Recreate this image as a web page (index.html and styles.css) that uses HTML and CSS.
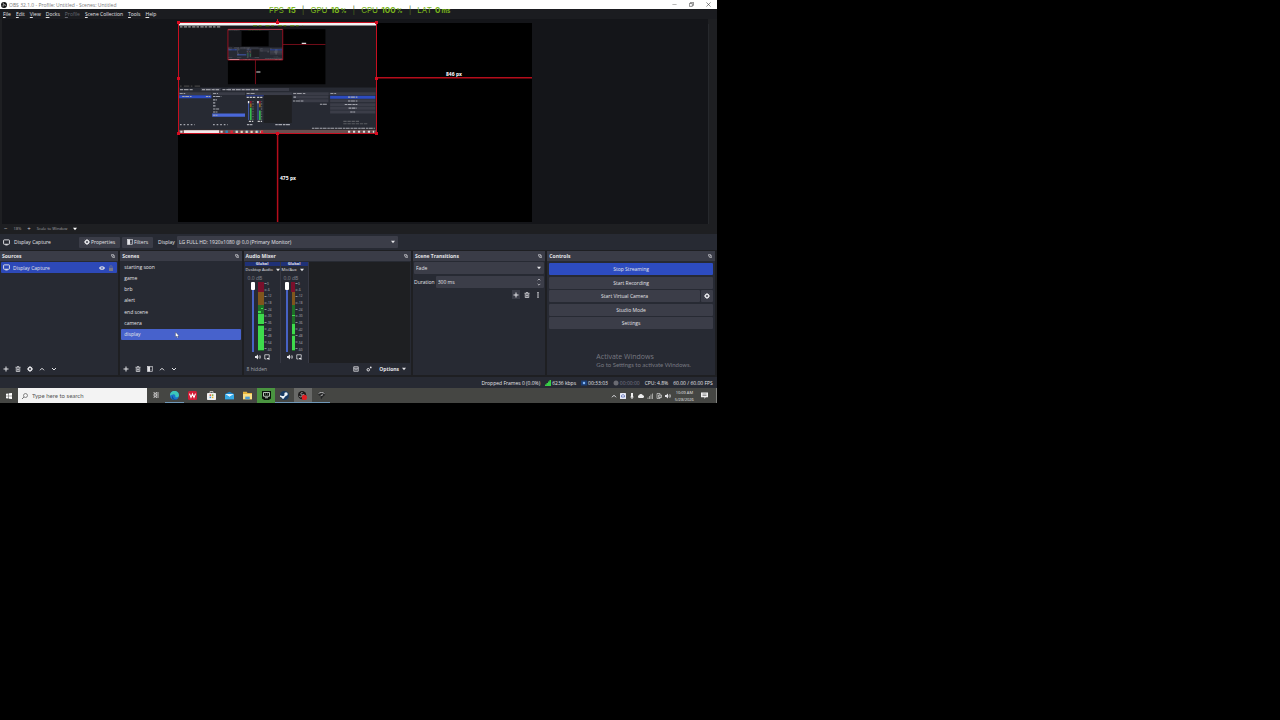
FILE: index.html
```
<!DOCTYPE html>
<html lang="en">
<head>
    <meta charset="UTF-8">
    <meta name="viewport" content="width=device-width, initial-scale=1.0">
    <title>OBS 32.1.0 - Profile: Untitled - Scenes: Untitled</title>
    <link rel="stylesheet" href="styles.css">
</head>
<body>
    <!-- shared icons -->
    <svg class="defs" width="0" height="0" aria-hidden="true">
        <symbol id="i-monitor" viewBox="0 0 12 12"><rect x="1" y="1.5" width="10" height="7.5" rx="1" fill="none" stroke="currentColor" stroke-width="1.6"/><path d="M4 9h4v2H4z" fill="currentColor"/></symbol>
        <symbol id="i-gear" viewBox="0 0 12 12"><circle cx="6" cy="6" r="3.2" fill="none" stroke="currentColor" stroke-width="2.6"/><path d="M6 0v2M6 10v2M0 6h2M10 6h2M1.8 1.8l1.4 1.4M8.8 8.8l1.4 1.4M1.8 10.2l1.4-1.4M8.8 3.2l1.4-1.4" stroke="currentColor" stroke-width="2"/></symbol>
        <symbol id="i-filter" viewBox="0 0 12 12"><rect x="1" y="1" width="10" height="10" fill="none" stroke="currentColor" stroke-width="1.2"/><path d="M1 1h5v10H1z" fill="currentColor"/><path d="M8 3v1M8 6v1M8 9v1" stroke="currentColor" stroke-width="1.4"/></symbol>
        <symbol id="i-plus" viewBox="0 0 12 12"><path d="M6 1v10M1 6h10" stroke="currentColor" stroke-width="2"/></symbol>
        <symbol id="i-trash" viewBox="0 0 12 12"><path d="M1 2.5h10M4 1.2h4M2.5 3v8h7V3M5 5v4M7 5v4" fill="none" stroke="currentColor" stroke-width="1.5"/></symbol>
        <symbol id="i-up" viewBox="0 0 12 12"><path d="M2 8.5l4-4 4 4" fill="none" stroke="currentColor" stroke-width="2"/></symbol>
        <symbol id="i-down" viewBox="0 0 12 12"><path d="M2 4l4 4 4-4" fill="none" stroke="currentColor" stroke-width="2"/></symbol>
        <symbol id="i-caret" viewBox="0 0 12 12"><path d="M0 2h12L6 10z" fill="currentColor"/></symbol>
        <symbol id="i-float" viewBox="0 0 12 12"><path d="M1.5 1.5h6v5h-6zM5 7v3.5h6V5H8" fill="none" stroke="currentColor" stroke-width="1.6"/></symbol>
        <symbol id="i-eye" viewBox="0 0 12 12"><path d="M0 6c2.5-5 9.5-5 12 0-2.5 5-9.5 5-12 0z" fill="currentColor"/><circle cx="6" cy="6" r="1.9" fill="none" stroke="#2d49b8" stroke-width="1.3"/></symbol>
        <symbol id="i-lock" viewBox="0 0 12 12"><path d="M2 5.5h8V12H2z" fill="currentColor"/><path d="M3.8 5.5V3.5a2.2 2.2 0 0 1 4.4 0v2" fill="none" stroke="currentColor" stroke-width="1.4"/></symbol>
        <symbol id="i-dots" viewBox="0 0 12 12"><circle cx="6" cy="1.8" r="1.6" fill="currentColor"/><circle cx="6" cy="6" r="1.6" fill="currentColor"/><circle cx="6" cy="10.2" r="1.6" fill="currentColor"/></symbol>
        <symbol id="i-speaker" viewBox="0 0 12 12"><path d="M0 4h2.5L6 1v10L2.5 8H0z" fill="currentColor"/><path d="M7.5 4c1 1.2 1 2.8 0 4M9.3 2.2c2 2 2 5.6 0 7.6" fill="none" stroke="currentColor" stroke-width="1.4"/></symbol>
        <symbol id="i-monitoring" viewBox="0 0 12 12"><path d="M5 10H1.5V1.5h9V6" fill="none" stroke="currentColor" stroke-width="1.5"/><path d="M6 8h2l3-2v6L8 10.5H6z" fill="currentColor"/></symbol>
        <symbol id="i-layout" viewBox="0 0 12 12"><path d="M1.5 1.5h9v9h-9zM1.5 4.5h9M3 7.5h6" fill="none" stroke="currentColor" stroke-width="1.5"/></symbol>
        <symbol id="i-gears" viewBox="0 0 12 12"><circle cx="4.5" cy="7.5" r="2.5" fill="none" stroke="currentColor" stroke-width="2"/><circle cx="9.5" cy="2.8" r="1.8" fill="currentColor"/></symbol>

        <!-- small-scale drawing of the captured desktop -->
        <symbol id="desk" viewBox="0 0 716 403">
            <path fill="#16171b" d="M0 0h716v403H0z"/>
            <path fill="#f4f4f4" d="M0 0h716v9H0z"/>
            <path fill="#000" d="M178 23h354v199H178z"/>
            <path stroke="#999" stroke-width="4" stroke-dasharray="9 5 12 4" d="M4 14h150"/>
            <path stroke="#5d8a10" stroke-width="4" stroke-dasharray="15 6 10 14" d="M269 10h182"/>
            <path stroke="#444" stroke-width="4" stroke-dasharray="6 8 20 5" d="M4 229h74"/>
            <path fill="#272a33" d="M0 234h716v153H0z"/>
            <path fill="#3a3c47" d="M0 251h118v10H0zM121 251h119v10H121zM244 251h166v10H244zM413 251h131v10H413zM547 251h167v10H547zM178 236h222v11H178zM80 236h40v11H80zM122 236h30v11h-30z"/>
            <path stroke="#9b9ca3" stroke-width="4" stroke-dasharray="11 3 17 4" d="M4 242h46M84 242h62M158 242h130M3 256h20M124 256h18M246 256h29M415 256h44M550 256h21"/>
            <path fill="#2d4cc0" d="M1 262h117v11H1zM549 264h164v11H549z"/>
            <path fill="#4a68da" d="M121 329h119v11H121z"/>
            <path fill="#3b3d48" d="M549 277h164v11H549zM549 291h164v11H549zM549 304h164v11H549zM549 318h164v11H549zM415 263h128v11H415zM435 277h108v11H435z"/>
            <path stroke="#a6a8b0" stroke-width="4" stroke-dasharray="9 2 14 3" d="M12 267h34M98 267h16M124 267h30M124 279h14M124 290h8M124 301h10M124 312h22M124 323h16M124 335h16M416 269h11M414 283h40M614 269h34M614 283h34M602 296h46M616 309h30M622 323h18M512 295h28M247 369h20M350 369h54M483 382h228"/>
            <path stroke="#a6a8b0" stroke-width="5" stroke-dasharray="6 7" d="M4 369h54M124 369h54"/>
            <path fill="#1e1f22" d="M308 262h102v101H308z"/>
            <path fill="#28388a" d="M244 262h64v4h-64z"/>
            <path stroke="#ccc" stroke-width="4" stroke-dasharray="8 3" d="M246 270h34M284 270h22M254 357h16M286 357h16"/>
            <path stroke="#4762c4" stroke-width="3" d="M253 284v68M287 284v68"/>
            <path stroke="#eee" stroke-width="5" d="M253 283v8M287 283v8"/>
            <path stroke="#8b1632" stroke-width="6" d="M261 283v9M294 283v9"/>
            <path stroke="#96651d" stroke-width="6" d="M261 292v14M294 292v14"/>
            <path stroke="#36bd4c" stroke-width="6" d="M261 308v44M294 318v34"/>
            <path stroke="#777" stroke-width="5" stroke-dasharray="2 4" d="M269 284v68M300 284v68"/>
            <path stroke="#5a5c62" stroke-width="4" stroke-dasharray="12 3" d="M597 357h58M597 366h87"/>
            <path fill="#6a4f50" d="M0 388h716v15H0z"/>
            <path fill="#f3e9ea" d="M18 389h128v13H18z"/>
            <path stroke="#ddd" stroke-width="7" stroke-dasharray="8 10" d="M5 395h9M151 395h12M614 395h95"/>
            <path stroke="#3386b8" stroke-width="9" stroke-dasharray="9 28" d="M169 395h132"/>
            <path stroke="#dfd6c0" stroke-width="8" stroke-dasharray="8 10" d="M206 395h108"/>
            <path stroke="#d42a38" stroke-width="9" d="M187 395h9M298 395h8"/>
        </symbol>
        <symbol id="desk-nested" viewBox="0 0 716 403">
            <use href="#desk" width="716" height="403"/>
            <use href="#desk" x="178" y="23" width="199" height="112"/>
            <path fill="none" stroke="#b01428" stroke-width="3" d="M178 23h199v111H178z"/>
            <path fill="none" stroke="#8a101e" stroke-width="3" d="M377 78h155M278 134v88"/>
            <path stroke="#ddd" stroke-width="4" d="M446 74h16M281 178h15"/>
        </symbol>
    </svg>

    <div class="desktop">
        <header class="titlebar">
            <svg class="app-icon" viewBox="0 0 12 12"><circle cx="6" cy="6" r="6" fill="#111"/><path d="M6 6C3 5 4 2 6 2M6 6c2-2 4 0 3 2M6 6c0 3-3 3-4 1" fill="none" stroke="#ddd" stroke-width="1.3"/></svg>
            <span class="title">OBS 32.1.0 - Profile: Untitled - Scenes: Untitled</span>
            <div class="window-buttons">
                <button aria-label="Minimize"><svg viewBox="0 0 12 12"><path d="M1 6h10" stroke="#555"/></svg></button>
                <button aria-label="Restore"><svg viewBox="0 0 12 12"><path d="M1 3.5h7v7H1zM3.5 3V1h7.5v7H8.5" fill="none" stroke="#333" stroke-width="1.3"/></svg></button>
                <button aria-label="Close"><svg viewBox="0 0 12 12"><path d="M1 1l10 10M11 1L1 11" stroke="#333" stroke-width="1.3"/></svg></button>
            </div>
        </header>

        <div class="overlay">
            <span>FPS <b>15</b></span><i>|</i>
            <span>GPU <b>18<small>%</small></b></span><i>|</i>
            <span>CPU <b>100<small>%</small></b></span><i>|</i>
            <span>LAT <b>0<small>ms</small></b></span>
        </div>

        <nav class="menubar">
            <a href="#"><u>F</u>ile</a>
            <a href="#"><u>E</u>dit</a>
            <a href="#"><u>V</u>iew</a>
            <a href="#"><u>D</u>ocks</a>
            <a href="#" class="dim"><u>P</u>rofile</a>
            <a href="#"><u>S</u>cene Collection</a>
            <a href="#"><u>T</u>ools</a>
            <a href="#"><u>H</u>elp</a>
        </nav>

        <main class="preview">
            <svg viewBox="0 19 716 205" preserveAspectRatio="xMinYMin meet">
                <path fill="#141519" d="M2 19h706v205H2z"/>
                <path fill="#26282c" d="M708 24h1v200h-1z"/>
                <path fill="#000" d="M178 23h354v199H178z"/>
                <use href="#desk-nested" x="178" y="23" width="199" height="111"/>
                <path fill="none" stroke="#c60f20" d="M178.5 22.5h198v111h-198z"/>
                <path fill="none" stroke="#b50d1b" stroke-width="1.5" d="M377 77.8h155"/>
                <path fill="none" stroke="#b50d1b" stroke-width="1.5" d="M277.6 134v88"/>
                <path fill="#d90b20" d="M177 21h3v3h-3zM276 21h3v3h-3zM375 21h3v3h-3zM177 77h3v3h-3zM375 77h3v3h-3zM177 132h3v3h-3zM276 132h3v3h-3zM375 132h3v3h-3zM277 19h1v3h-1z"/>
                <text x="446" y="76">846 px</text>
                <text x="280" y="180">475 px</text>
            </svg>
        </main>

        <div class="zoombar">
            <button class="step" aria-label="Zoom out">−</button>
            <span>18%</span>
            <button class="step" aria-label="Zoom in">+</button>
            <label for="scale">Scale to Window</label>
            <button id="scale" aria-label="Scaling options"><svg><use href="#i-caret"/></svg></button>
        </div>

        <div class="context">
            <div class="source-name"><svg class="icon-lg"><use href="#i-monitor"/></svg>Display Capture</div>
            <button class="btn props"><svg><use href="#i-gear"/></svg>Properties</button>
            <button class="btn filters"><svg><use href="#i-filter"/></svg>Filters</button>
            <label for="display">Display</label>
            <div class="select">
                <select id="display"><option>LG FULL HD: 1920x1080 @ 0,0 (Primary Monitor)</option></select>
                <svg><use href="#i-caret"/></svg>
            </div>
        </div>

        <div class="docks">
            <section class="dock">
                <h2>Sources<svg><use href="#i-float"/></svg></h2>
                <div class="dock-body">
                    <div class="source selected">
                        <svg class="icon-lg"><use href="#i-monitor"/></svg>
                        <span>Display Capture</span>
                        <svg><use href="#i-eye"/></svg>
                        <svg class="dim"><use href="#i-lock"/></svg>
                    </div>
                </div>
                <footer class="tools">
                    <button aria-label="Add source"><svg><use href="#i-plus"/></svg></button>
                    <button aria-label="Remove source"><svg><use href="#i-trash"/></svg></button>
                    <button aria-label="Source properties"><svg><use href="#i-gear"/></svg></button>
                    <button aria-label="Move source up"><svg><use href="#i-up"/></svg></button>
                    <button aria-label="Move source down"><svg><use href="#i-down"/></svg></button>
                </footer>
            </section>

            <section class="dock">
                <h2>Scenes<svg><use href="#i-float"/></svg></h2>
                <div class="dock-body">
                    <ul class="scenes">
                        <li>starting soon</li>
                        <li>game</li>
                        <li>brb</li>
                        <li>alert</li>
                        <li>end scene</li>
                        <li>camera</li>
                        <li class="active">display
                            <svg class="cursor" viewBox="0 0 8 12"><path d="M1 0v10l2-2 2 4 1.5-1-1.5-3h3z" fill="#fff" stroke="#333" stroke-width=".6"/></svg>
                        </li>
                    </ul>
                </div>
                <footer class="tools">
                    <button aria-label="Add scene"><svg><use href="#i-plus"/></svg></button>
                    <button aria-label="Remove scene"><svg><use href="#i-trash"/></svg></button>
                    <button aria-label="Scene filters"><svg><use href="#i-filter"/></svg></button>
                    <button aria-label="Move scene up"><svg><use href="#i-up"/></svg></button>
                    <button aria-label="Move scene down"><svg><use href="#i-down"/></svg></button>
                </footer>
            </section>

            <section class="dock">
                <h2>Audio Mixer<svg><use href="#i-float"/></svg></h2>
                <div class="dock-body mixer">
                    <div class="channel wide">
                        <div class="tag">Global</div>
                        <button class="name">Desktop Audio<svg><use href="#i-caret"/></svg></button>
                        <div class="db">0.0 dB</div>
                        <div class="levels">
                            <input type="range" min="0" max="100" value="100" aria-label="Desktop Audio volume">
                            <svg class="meter" viewBox="0 0 15 70">
                                <path fill="#7a0f2b" d="M0 0h6v10H0z"/><path fill="#80551c" d="M0 10h6v13H0z"/><path fill="#1d7027" d="M0 23h6v46H0z"/>
                                <path fill="#3ddb4c" d="M0 32h6v10H0zM0 44h6v24H0zM0 29h3v2H0zM3 26h2v1H3z"/><path fill="#17331b" d="M0 42h6v1H0z"/>
                                <path stroke="#8b8d94" stroke-dasharray="1 5.5" stroke-width="2" d="M7.5 1v68"/>
                                <g><text x="9" y="3">0</text><text x="9" y="9">-6</text><text x="9" y="15">-12</text><text x="9" y="22">-18</text><text x="9" y="29">-24</text><text x="9" y="35">-30</text><text x="9" y="42">-36</text><text x="9" y="49">-42</text><text x="9" y="55">-48</text><text x="9" y="62">-54</text><text x="9" y="69">-60</text></g>
                            </svg>
                        </div>
                        <div class="channel-tools">
                            <button aria-label="Mute Desktop Audio"><svg><use href="#i-speaker"/></svg></button>
                            <button aria-label="Monitor Desktop Audio"><svg><use href="#i-monitoring"/></svg></button>
                        </div>
                    </div>
                    <div class="channel">
                        <div class="tag">Global</div>
                        <button class="name">Mic/Aux<svg><use href="#i-caret"/></svg></button>
                        <div class="db">0.0 dB</div>
                        <div class="levels">
                            <input type="range" min="0" max="100" value="100" aria-label="Mic/Aux volume">
                            <svg class="meter" viewBox="0 0 15 70">
                                <path fill="#7a0f2b" d="M1 0h4v10H1z"/><path fill="#80551c" d="M2 10h3v13H2z"/><path fill="#1d7027" d="M2 23h3v46H2z"/>
                                <path fill="#3ddb4c" d="M2 42h3v10H2zM2 54h3v14H2zM2 33h3v1H2z"/>
                                <path stroke="#8b8d94" stroke-dasharray="1 5.5" stroke-width="2" d="M6.5 1v68"/>
                                <g><text x="8" y="3">0</text><text x="8" y="9">-6</text><text x="8" y="15">-12</text><text x="8" y="22">-18</text><text x="8" y="29">-24</text><text x="8" y="35">-30</text><text x="8" y="42">-36</text><text x="8" y="49">-42</text><text x="8" y="55">-48</text><text x="8" y="62">-54</text><text x="8" y="69">-60</text></g>
                            </svg>
                        </div>
                        <div class="channel-tools">
                            <button aria-label="Mute Mic/Aux"><svg><use href="#i-speaker"/></svg></button>
                            <button aria-label="Monitor Mic/Aux"><svg><use href="#i-monitoring"/></svg></button>
                        </div>
                    </div>
                    <div class="mixer-empty"></div>
                </div>
                <footer class="tools mixer-tools">
                    <span class="hidden-count">8 hidden</span>
                    <button aria-label="Toggle layout"><svg><use href="#i-layout"/></svg></button>
                    <button aria-label="Advanced audio properties"><svg><use href="#i-gears"/></svg></button>
                    <button class="options">Options<svg><use href="#i-caret"/></svg></button>
                </footer>
            </section>

            <section class="dock">
                <h2>Scene Transitions<svg><use href="#i-float"/></svg></h2>
                <div class="dock-body transitions">
                    <div class="select">
                        <select aria-label="Transition"><option>Fade</option></select>
                        <svg><use href="#i-caret"/></svg>
                    </div>
                    <div class="duration">
                        <label for="duration">Duration</label>
                        <div class="spin">
                            <input id="duration" type="text" value="300 ms">
                            <div class="spin-buttons"><svg><use href="#i-up"/></svg><svg><use href="#i-down"/></svg></div>
                        </div>
                    </div>
                    <div class="transition-tools">
                        <button class="add" aria-label="Add transition"><svg><use href="#i-plus"/></svg></button>
                        <button aria-label="Remove transition"><svg><use href="#i-trash"/></svg></button>
                        <button aria-label="Transition menu"><svg><use href="#i-dots"/></svg></button>
                    </div>
                </div>
            </section>

            <section class="dock">
                <h2>Controls<svg><use href="#i-float"/></svg></h2>
                <div class="dock-body">
                    <div class="controls">
                        <button class="btn primary">Stop Streaming</button>
                        <button class="btn">Start Recording</button>
                        <div class="split">
                            <button class="btn">Start Virtual Camera</button>
                            <button class="btn square" aria-label="Virtual camera settings"><svg><use href="#i-gear"/></svg></button>
                        </div>
                        <button class="btn">Studio Mode</button>
                        <button class="btn">Settings</button>
                    </div>
                    <div class="watermark">
                        <p class="big">Activate Windows</p>
                        <p>Go to Settings to activate Windows.</p>
                    </div>
                </div>
            </section>
        </div>

        <div class="statusbar">
            <span>Dropped Frames 0 (0.0%)</span>
            <span><svg viewBox="0 0 12 12"><path d="M0 9h3v3H0zM3 6h3v6H3zM6 3h3v9H6zM9 0h3v12H9z" fill="#38cf46"/></svg>6236 kbps</span>
            <span><svg viewBox="0 0 12 12"><path d="M0 1h12v10H0z" fill="#1b3f78"/><circle cx="6" cy="6" r="2.5" fill="#7fb4f5"/></svg>00:33:03</span>
            <span class="dim"><svg viewBox="0 0 12 12"><circle cx="6" cy="6" r="5" fill="#6a6b72"/></svg>00:00:00</span>
            <span>CPU: 4.8%</span>
            <span>60.00 / 60.00 FPS</span>
        </div>

        <div class="taskbar">
            <button class="start" aria-label="Start"><svg viewBox="0 0 12 12"><path d="M0 1.5l5-.7v4.7H0zM6 .7L12 0v5.5H6zM0 6.5h5v4.7l-5-.7zM6 6.5h6V12l-6-.7z" fill="#fff"/></svg></button>
            <div class="search">
                <svg viewBox="0 0 12 12"><circle cx="7" cy="5" r="4" fill="none" stroke="#444" stroke-width="1.2"/><path d="M4 8l-4 4" stroke="#444" stroke-width="1.4"/></svg>
                <input type="text" placeholder="Type here to search" aria-label="Search">
            </div>
            <div class="apps">
                <button aria-label="Task View"><svg viewBox="0 0 12 12"><path d="M2 0v2.5h5V0M2 12V9.5h5V12M2 4h5v4H2zM10 0v12" fill="none" stroke="#e6e6e6" stroke-width="1.4"/></svg></button>
                <button class="open" aria-label="Edge"><svg viewBox="0 0 12 12"><circle cx="6" cy="6" r="6" fill="#1b74c9"/><path d="M0 6a6 6 0 0 1 12-.5c0 2.5-3 3.5-5 2.5 1-2-1-4-3-3.5S0 6 0 6z" fill="#3cc7b8"/><path d="M4 6c-1 3 2 6 6 4.5-4 3-10 0-6-4.5z" fill="#0c4b93"/></svg></button>
                <button aria-label="WPS"><svg viewBox="0 0 12 12"><rect width="12" height="12" rx="2" fill="#d31b36"/><path d="M2 3.5L4 8.5 6 4l2 4.5 2-5" fill="none" stroke="#fff" stroke-width="1.5"/></svg></button>
                <button aria-label="Store"><svg viewBox="0 0 12 12"><path d="M4 2.5V.8h4v1.7" fill="none" stroke="#eee"/><rect y="2.5" width="12" height="9.5" rx="1" fill="#f1f1f1"/><path d="M3.5 4.5h2v2h-2z" fill="#e4522a"/><path d="M6.5 4.5h2v2h-2z" fill="#7cb32c"/><path d="M3.5 7.5h2v2h-2z" fill="#2a9de0"/><path d="M6.5 7.5h2v2h-2z" fill="#f0b320"/></svg></button>
                <button aria-label="Mail"><svg viewBox="0 0 12 12"><path d="M0 4l6-3 6 3v7H0z" fill="#1a83c8"/><path d="M0 4h12L6 8z" fill="#d8f0fc"/><path d="M0 4l6 4 6-4v7H0z" fill="#35aae6"/></svg></button>
                <button aria-label="File Explorer"><svg viewBox="0 0 12 12"><path d="M0 1h5l1 1.5h6V11H0z" fill="#e8b63f"/><path d="M0 4h12v7H0z" fill="#fadf86"/><path d="M3 7.5h6V11H3z" fill="#4d9ed6"/></svg></button>
                <button class="green" aria-label="Game"><svg viewBox="0 0 12 12"><path d="M0 0h12v10l-3 2H3l-3-2z" fill="#0b120b"/><path d="M2 2h8v5H2zM4 4h1M7 4h1M4 9h4" fill="none" stroke="#c8d4c8" stroke-width="1.2"/></svg></button>
                <button class="open" aria-label="Steam"><svg viewBox="0 0 12 12"><circle cx="6" cy="6" r="6" fill="#173a63"/><circle cx="8" cy="4" r="2.3" fill="#eef3f8"/><path d="M0 6.5l4.5 2L8 5" fill="none" stroke="#eef3f8" stroke-width="2"/><circle cx="4" cy="8.5" r="1.7" fill="#eef3f8"/></svg></button>
                <button class="open current" aria-label="OBS Studio"><svg viewBox="0 0 12 12"><circle cx="5.5" cy="5.5" r="5.5" fill="#1c1a1b"/><path d="M5.5 5.5C2.5 4.5 4 1.5 6 2M5.5 5.5c0 3-3 3-4 1M5.5 5.5c2-2 4 0 3 1" fill="none" stroke="#c7c7c7"/><circle cx="8.5" cy="8.5" r="3.5" fill="#e01f24"/></svg></button>
                <button class="open" aria-label="Capture tool"><svg viewBox="0 0 12 12"><path d="M1 4c2-4 9-4 10 0 0 3-4 3-5 7-2-1-1-4 0-5-2 1-4 0-5-2z" fill="#242526"/><path d="M2 3.5c2-2 6-2 8 0M5 6l3-1" fill="none" stroke="#c9c9c9" stroke-width="1.2"/></svg></button>
            </div>
            <div class="tray">
                <svg><use href="#i-up"/></svg>
                <svg viewBox="0 0 12 12"><rect width="12" height="12" rx="1" fill="#e6e9f5"/><path d="M3 8V5l3-2 3 2v3z" fill="none" stroke="#4c5fb0" stroke-width="1.4"/></svg>
                <svg viewBox="0 0 12 12"><path d="M4 0h4v7H4zM3 7h6v2H3zM5 9h2v3H5z" fill="#eee"/></svg>
                <svg viewBox="0 0 12 12"><path d="M2 10a2.8 2.8 0 0 1 0-5.5 4 4 0 0 1 7.5 0A2.8 2.8 0 0 1 10 10z" fill="#eee"/></svg>
                <svg viewBox="0 0 12 12"><path d="M1 9h2v3H1zM4 6h2v6H4zM7 3h2v9H7zM10 1h2v11h-2z" fill="#a5a5a2"/></svg>
                <svg viewBox="0 0 12 12"><path d="M2 1h6v10H2zM5 4h6v5H5z" fill="none" stroke="#ddd" stroke-width="1.3"/></svg>
                <svg><use href="#i-speaker"/></svg>
                <div class="clock">10:09 AM<br>5/28/2026</div>
                <svg class="notify" viewBox="0 0 12 12"><path d="M0 1h12v8H8l-2 3V9H0z" fill="#f2f2f2"/><path d="M2.5 3.5h7M2.5 6h7" stroke="#555"/></svg>
            </div>
        </div>
    </div>
</body>
</html>
```
FILE: styles.css
```
* {
    box-sizing: border-box;
}
body {
    margin: 0;
    background-color: #000;
    color: #e4e4e8;
    font-family: "Open Sans", "Noto Sans", sans-serif;
    font-size: 5px;
    line-height: 8px;
}
.defs {
    position: absolute;
}
svg {
    display: block;
    flex: none;
    width: 6px;
    height: 6px;
}
h2, p, ul {
    margin: 0;
    padding: 0;
}
button, input, select {
    margin: 0;
    padding: 0;
    border: none;
    background: none;
    color: inherit;
    font: inherit;
    min-width: 0;
}
button {
    display: flex;
    align-items: center;
    justify-content: center;
}
.dim {
    color: #77798a;
}
.icon-lg {
    width: 7px;
    height: 7px;
}

.desktop {
    position: relative;
    width: 56%;
    background-color: #1e1f22;
}

/* title and menu */
.titlebar {
    display: flex;
    align-items: center;
    height: 9px;
    padding: 0 6px 0 1px;
    background-color: #fff;
    color: #777;
}
.title {
    flex: 1;
    padding-left: 2px;
    white-space: pre;
}
.window-buttons {
    display: flex;
    gap: 12px;
}
.window-buttons svg {
    width: 5px;
    height: 5px;
}
.overlay {
    position: absolute;
    top: 5px;
    left: 269px;
    display: flex;
    gap: 6px;
    color: #78b41c;
    font-family: Inter, sans-serif;
    font-size: 8px;
    line-height: 10px;
    white-space: nowrap;
}
.overlay b {
    margin-left: 1px;
}
.overlay i {
    color: #4b6b1c;
    font-style: normal;
}
.overlay small {
    margin-left: 1px;
    font-size: 6px;
}
.menubar {
    display: flex;
    gap: 5px;
    height: 10px;
    padding: 1px 3px;
    background-color: #1b1c20;
}
.menubar a {
    color: inherit;
    text-decoration: none;
}
.menubar a.dim {
    color: #666873;
}

/* preview */
.preview svg {
    width: 100%;
    height: 205px;
}
.preview text {
    fill: #fff;
    font-size: 5px;
    font-weight: 700;
}
.zoombar {
    display: flex;
    align-items: center;
    gap: 6px;
    height: 10px;
    padding-left: 4px;
    color: #a0a0a6;
    font-size: 4px;
}
.zoombar .step {
    color: #d0d0d4;
    font-size: 6px;
}
#scale {
    color: #fff;
}
#scale svg {
    width: 4px;
    height: 4px;
}

/* source toolbar */
.context {
    display: flex;
    align-items: center;
    height: 16px;
    padding-left: 3px;
    background-color: #272a33;
}
.source-name {
    display: flex;
    align-items: center;
    gap: 4px;
    width: 76px;
}
.btn {
    gap: 1px;
    height: 11px;
    border-radius: 1px;
    background-color: #3b3d48;
}
.props {
    width: 41px;
}
.filters {
    width: 31px;
    margin-left: 2px;
}
.context label {
    width: 24px;
    padding-left: 5px;
}
.select {
    display: flex;
    align-items: center;
    height: 12px;
    padding: 0 3px 0 2px;
    border-radius: 1px;
    background-color: #3b3d48;
}
.context .select {
    width: 31%;
}
.select select {
    flex: 1;
    appearance: none;
}
.select svg {
    width: 4px;
    height: 4px;
}

/* docks */
.docks {
    display: grid;
    grid-template-columns: 118fr 121fr 167fr 132fr 167fr;
    gap: 2px;
    padding: 1px 2px 2px 0;
}
.dock {
    display: flex;
    flex-direction: column;
    min-width: 0;
    background-color: #272a33;
}
.dock h2 {
    display: flex;
    align-items: center;
    justify-content: space-between;
    height: 10px;
    padding: 0 3px 0 2px;
    background-color: #3a3c47;
    font-size: 5px;
    font-weight: 700;
}
.dock h2 svg {
    width: 4px;
    height: 4px;
}
.dock-body {
    flex: 1;
    min-height: 102px;
    padding: 1px 1px 0;
}
.tools {
    display: flex;
    align-items: center;
    gap: 6px;
    height: 12px;
    padding: 0 3px;
}
.source {
    display: flex;
    align-items: center;
    gap: 3px;
    height: 11px;
    padding: 0 3px 0 2px;
    border-radius: 1px;
}
.source.selected {
    background-color: #2d49b8;
}
.source span {
    flex: 1;
}
.scenes {
    display: flex;
    flex-direction: column;
    justify-content: space-between;
    height: 78px;
    list-style: none;
}
.scenes li {
    position: relative;
    height: 11px;
    padding: 1px 3px;
    border-radius: 1px;
}
.scenes .active {
    background-color: #4762cc;
}
.cursor {
    position: absolute;
    top: 3px;
    left: 54px;
    width: 4px;
    height: 6px;
}

/* mixer */
.mixer {
    display: flex;
}
.channel {
    width: 28px;
    border-right: 1px solid #363843;
}
.channel.wide {
    width: 36px;
}
.mixer-empty {
    flex: 1;
    background-color: #1e1f22;
}
.tag {
    height: 4px;
    background-color: #1f3177;
    font-size: 4px;
    font-weight: 700;
    line-height: 4px;
    text-align: center;
}
.name {
    justify-content: flex-start;
    gap: 3px;
    padding-left: 1px;
    white-space: nowrap;
    font-size: 4px;
}
.name svg {
    width: 4px;
    height: 4px;
}
.db {
    padding-left: 3px;
    color: #83858f;
    font-size: 5px;
}
.levels {
    display: flex;
    align-items: flex-start;
    gap: 3px;
    padding-left: 6px;
}
.channel:not(.wide) .levels {
    gap: 1px;
    padding-left: 4px;
}
.levels input {
    appearance: none;
    writing-mode: vertical-lr;
    direction: rtl;
    width: 4px;
    height: 70px;
    background: linear-gradient(#4762c4, #4762c4) center / 2px 100% no-repeat;
}
.levels input::-webkit-slider-thumb {
    appearance: none;
    width: 4px;
    height: 8px;
    border-radius: 1px;
    background-color: #fff;
}
.meter {
    width: 15px;
    height: 70px;
}
.meter text {
    fill: #b9bac1;
    font-size: 3px;
}
.channel-tools {
    display: flex;
    justify-content: center;
    gap: 3px;
    padding-top: 2px;
}
.mixer-tools {
    gap: 7px;
    padding-right: 5px;
}
.hidden-count {
    flex: 1;
    color: #a5a7b0;
}
.options {
    gap: 3px;
    font-weight: 700;
}
.options svg {
    width: 4px;
    height: 4px;
}

/* transitions */
.transitions {
    display: flex;
    flex-direction: column;
    gap: 2px;
}
.duration {
    display: flex;
    align-items: center;
    gap: 1px;
}
.spin {
    display: flex;
    flex: 1;
    align-items: center;
    height: 12px;
    padding: 0 3px 0 2px;
    border-radius: 1px;
    background-color: #3b3d48;
}
.spin input {
    flex: 1;
}
.spin-buttons svg {
    width: 4px;
    height: 5px;
}
.transition-tools {
    display: flex;
    justify-content: flex-end;
    gap: 3px;
    padding-right: 2px;
}
.transition-tools button {
    width: 8px;
    height: 9px;
}
.transition-tools .add {
    background-color: #3b3d48;
}

/* controls */
.controls {
    display: flex;
    flex-direction: column;
    justify-content: space-between;
    height: 68px;
    padding: 1px;
}
.controls .btn {
    height: 12px;
}
.controls .primary {
    background-color: #2d4cc0;
}
.split {
    display: flex;
    gap: 1px;
}
.split .btn {
    flex: 1;
}
.split .square {
    flex: none;
    width: 12px;
}
.watermark {
    padding: 23px 0 0 48px;
    color: #777981;
    font-family: Lato, sans-serif;
    font-size: 6px;
    white-space: nowrap;
}
.watermark .big {
    font-size: 7px;
    font-family: "Open Sans", sans-serif;
}

/* status bar */
.statusbar {
    display: flex;
    align-items: center;
    justify-content: flex-end;
    gap: 5px;
    height: 11px;
    padding-right: 4px;
    background-color: #272a33;
}
.statusbar span {
    display: flex;
    align-items: center;
    gap: 1px;
}

/* taskbar */
.taskbar {
    display: flex;
    height: 15px;
    background-color: #454643;
}
.start {
    width: 18px;
}
.search {
    display: flex;
    align-items: center;
    gap: 4px;
    width: 18%;
    padding-left: 4px;
    background-color: #f3f3f3;
}
.search input {
    flex: 1;
    font-family: Lato, sans-serif;
    font-size: 6px;
}
.search input::placeholder {
    color: #555;
}
.apps {
    display: flex;
    width: 25.6%;
}
.apps button {
    flex: 1;
    border-bottom: 1px solid transparent;
}
.apps svg {
    width: 9px;
    height: 9px;
}
.apps button:first-child svg {
    width: 6px;
    height: 6px;
}
.apps .open {
    border-color: #7098b8;
}
.apps .current {
    background-color: #686967;
}
.apps .green {
    background-color: #4a9440;
}
.tray {
    display: flex;
    flex: 1;
    align-items: center;
    justify-content: flex-end;
    gap: 3px;
    padding-right: 8px;
    border-right: 1px solid #80817e;
}
.clock {
    padding: 0 4px 0 1px;
    font-size: 4px;
    line-height: 7px;
    text-align: center;
}
.notify {
    width: 7px;
    height: 7px;
}
```
